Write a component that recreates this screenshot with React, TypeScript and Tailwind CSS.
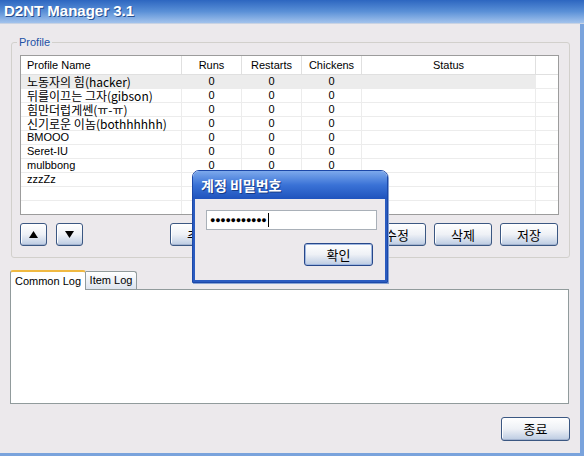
import clsx from "clsx"

const FONT = "font-['Liberation_Sans','Noto_Sans_CJK_KR',sans-serif]"
const KR = "font-['Noto_Sans_CJK_KR','Liberation_Sans',sans-serif]"

type Row = { name: string; kr?: boolean };

const rows: Row[] = [
  { name: "노동자의 힘(hacker)", kr: true },
  { name: "뒤를이끄는 그자(gibson)", kr: true },
  { name: "힘만더럽게쎈(ㅠ-ㅠ)", kr: true },
  { name: "신기로운 이놈(bothhhhhh)", kr: true },
  { name: "BMOOO" },
  { name: "Seret-IU" },
  { name: "mulbbong" },
  { name: "zzzZz" },
]

const cols = ["w-[161px]", "w-[60px]", "w-[60px]", "w-[60px]", "w-[174px]"]

const XpButton = ({ children, className }: { children: React.ReactNode; className?: string }) => (
  <div
    className={clsx(
      "flex items-center justify-center rounded-[3px] border border-[#3b5782] bg-linear-to-b from-white via-[#eef1f6] to-[#bccbe2] text-[13px] text-black shadow-[inset_0_-1px_0_#a3b3cf,inset_1px_0_0_#fff]",
      KR,
      className
    )}
  >
    {children}
  </div>
)

const Arrow = ({ down }: { down?: boolean }) => (
  <svg width="9" height="7" viewBox="0 0 9 7">
    <path d={down ? "M0 0H9L4.5 7Z" : "M0 7H9L4.5 0Z"} fill="#000" />
  </svg>
)

const App = () => {
  return (
    <div className={clsx("relative w-[584px] h-[456px] flex flex-col overflow-hidden bg-[#ece9ec]", FONT)}>
      {/* title bar */}
      <div className="h-[24px] flex items-center pl-[4px] bg-linear-to-b from-[#2d66c0] via-[#5a90d7] to-[#a3c3ec] border-b border-[#c9d3e3]">
        <span className="text-white font-bold text-[15px] [text-shadow:1px_1px_0_#264f90]">D2NT Manager 3.1</span>
      </div>

      <div className="flex-1 flex flex-col border-r-4 border-b-[3px] border-[#7aa3dc]">
        {/* Profile group */}
        <div className="relative ml-[11px] mt-[18px] w-[559px] h-[216px] rounded-[3px] border border-[#d2d0cc] pt-[12px] pl-[8px]">
          <span className="absolute -top-[9px] left-[5px] px-[2px] bg-[#ece9ec] text-[11px] leading-[16px] text-[#2252a6]">Profile</span>

          {/* list view */}
          <div className="w-[539px] h-[160px] border border-[#9c9c9c] bg-white overflow-hidden">
            <div className="flex h-[19px] border-b border-[#e0e0e0] text-[11px] text-black">
              <div className={clsx(cols[0], "pl-[6px] flex items-center border-r border-[#e0e0e0]")}>Profile Name</div>
              <div className={clsx(cols[1], "flex items-center justify-center border-r border-[#e0e0e0]")}>Runs</div>
              <div className={clsx(cols[2], "flex items-center justify-center border-r border-[#e0e0e0]")}>Restarts</div>
              <div className={clsx(cols[3], "flex items-center justify-center border-r border-[#e0e0e0]")}>Chickens</div>
              <div className={clsx(cols[4], "flex items-center justify-center border-r border-[#e0e0e0]")}>Status</div>
              <div className="flex-1" />
            </div>
            {[...rows, { name: "" }, { name: "" }].map((r, i) => (
              <div key={i} className="flex h-[14px] border-b border-[#ececec] text-black">
                <div className={clsx("flex", i === 0 && "bg-[#ececec]")}>
                  <div className={clsx(cols[0], "pl-[6px] flex items-center whitespace-nowrap border-r border-[#ececec] leading-[13px]", r.kr ? clsx(KR, "text-[12px]") : "text-[11px]")}>{r.name}</div>
                  {[1, 2, 3].map((c) => (
                    <div key={c} className={clsx(cols[c], "flex items-center justify-center text-[11px] leading-[13px] border-r border-[#ececec]")}>{r.name && i < 7 ? "0" : ""}</div>
                  ))}
                  <div className={clsx(cols[4], "border-r border-[#ececec]")} />
                </div>
                <div className="flex-1" />
              </div>
            ))}
          </div>

          {/* buttons */}
          <div className="flex items-center mt-[8px] h-[23px]">
            <XpButton className="w-[27px] h-[23px]"><Arrow /></XpButton>
            <XpButton className="w-[27px] h-[23px] ml-[9px]"><Arrow down /></XpButton>
            <XpButton className="w-[58px] h-[23px] ml-[87px]">추가</XpButton>
            <XpButton className="w-[58px] h-[23px] ml-[8px]">복사</XpButton>
            <XpButton className="w-[58px] h-[23px] ml-[8px]">시작</XpButton>
            <XpButton className="w-[58px] h-[23px] ml-[8px]">수정</XpButton>
            <XpButton className="w-[58px] h-[23px] ml-[8px]">삭제</XpButton>
            <XpButton className="w-[58px] h-[23px] ml-[8px]">저장</XpButton>
          </div>
        </div>

        {/* tabs */}
        <div className="ml-[10px] mt-[11px] flex items-end h-[20px]">
          <div className="h-[20px] w-[76px] flex items-center justify-center bg-white border border-b-0 border-[#919b9c] border-t-2 border-t-[#f0b941] rounded-t-[3px] text-[11px] text-black relative z-10 -mb-px">
            Common Log
          </div>
          <div className="h-[18px] w-[51px] flex items-center justify-center bg-linear-to-b from-white to-[#dde4ee] border border-l-0 border-b-0 border-[#919b9c] rounded-tr-[3px] text-[11px] text-black">
            Item Log
          </div>
        </div>
        <div className="ml-[10px] w-[559px] h-[115px] bg-white border border-[#919b9c]" />

        <div className="flex justify-end mt-[13px] pr-[10px]">
          <XpButton className="w-[69px] h-[24px]">종료</XpButton>
        </div>
      </div>

      {/* password dialog */}
      <div className="absolute left-[192px] top-[170px] w-[196px] h-[113px] flex flex-col rounded-t-[7px] overflow-hidden border border-[#1c48a8] shadow-[1px_1px_0_#86a2d4]">
        <div className="h-[28px] flex items-center pl-[8px] bg-linear-to-b from-[#7da9ec] via-[#3a72d6] to-[#1f53bd]">
          <span className={clsx(KR, "text-white font-bold text-[14px] [text-shadow:1px_1px_0_#173c86]")}>계정 비밀번호</span>
        </div>
        <div className="flex-1 flex flex-col bg-[#ece9ec] border-x-2 border-b-2 border-[#2a5bc0] px-[11px] pt-[11px]">
          <div className="h-[20px] w-[171px] bg-white border border-[#a9b0b8] flex items-center pl-[3px]">
            <span className="text-[9px] font-bold leading-none tracking-[-0.3px] text-black">●●●●●●●●●●●</span>
            <span className="ml-[1px] w-px h-[14px] bg-black" />
          </div>
          <div className="flex justify-end mt-[13px] pr-[1px]">
            <XpButton className="w-[69px] h-[23px] border-[#27478a] shadow-[inset_0_0_0_1px_#9fb7e0]">확인</XpButton>
          </div>
        </div>
      </div>
    </div>
  )
}

export default App
